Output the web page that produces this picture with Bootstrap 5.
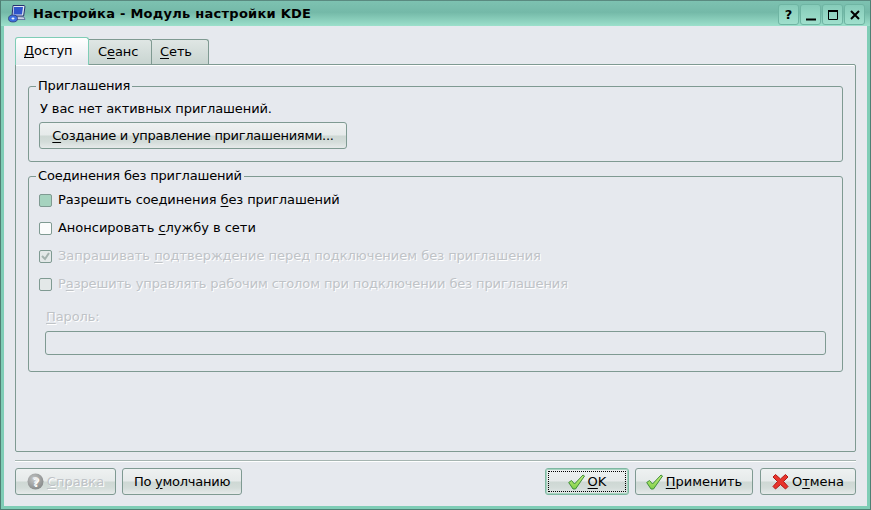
<!DOCTYPE html>
<html lang="ru">
<head>
<meta charset="utf-8">
<title>Настройка - Модуль настройки KDE</title>
<link href="https://cdn.jsdelivr.net/npm/bootstrap@5.3.0/dist/css/bootstrap.min.css" rel="stylesheet">
<style>
html,body{margin:0;height:510px;overflow:hidden}
body{font-family:"DejaVu Sans",sans-serif;font-size:13px;line-height:16px;letter-spacing:-.1px;color:#000;background:#e6e9ee}
.kwin{height:510px;display:flex;flex-direction:column;border:1px solid #4f7f74;border-top-color:#5a8a80;background:#7fcdb6}
.ktitle{height:25px;flex:none;display:flex;align-items:center;background:linear-gradient(#7dc2b1,#74b9a8 45%,#9ce0cb);padding:0 5px 0 6px}
.ktitle-text{font-weight:700;font-size:13px;margin-left:7px;letter-spacing:.26px}
.wbtn{width:21px;height:21px;margin:3px 0 0 1px;align-self:flex-start;border:1px solid #6fb5a3;border-radius:3px;background:linear-gradient(#86cbb9,#a0e0cd);display:flex;align-items:center;justify-content:center;padding:0;font-weight:700;font-size:13px;letter-spacing:0}
.kbody{flex:1;margin:0 3px 3px 3px;background:#e6e9ee;padding:11px 11px 0 11px;display:flex;flex-direction:column;min-height:0}
.ktabs{flex:none;height:27px;align-items:flex-end;border:0;margin:0;position:relative;z-index:1}
.ktab{height:25px;border:1px solid #7f9a92;border-bottom:0;border-left:0;border-radius:0 3px 0 0;background:linear-gradient(#dfe6e4,#c9d5d1);padding:4px 0 0 9px;line-height:16px}
.ktab.on{height:28px;margin-bottom:-1px;border-left:1px solid #7fcdb6;border-right:1px solid #7fcdb6;border-top:1px solid #7fcdb6;border-radius:3px 3px 0 0;background:linear-gradient(#fff,#e6e9ee);padding:5px 0 0 8px}
.ktw1{width:74px}
.ktw2{width:63px}
.ktw3{width:57px;padding-left:8px}
.kpane{height:388px;flex:none;border:1px solid #7f9a92;border-radius:0 2px 2px 2px;padding:13px 12px 0 12px;box-shadow:inset 0 1px 0 #fff}
.kgroup{border:1px solid #7f9a92;border-radius:3px;margin:0 0 6px 0;padding:0 10px;min-width:0}
.kgroup legend{float:none;width:auto;font-size:13px;line-height:16px;margin:0 0 0 -3px;padding:0 2px;letter-spacing:-.18px}
.kg1{height:84px}
.kg2{height:204px}
.ktext{margin-top:7px;height:20px;display:block;padding-left:1px}
.kbtn{height:27px;border:1px solid #7f9a92;border-radius:3px;background:linear-gradient(#eef1f1 0,#e6eaea 48%,#ced8d4 52%,#d3dcd9 75%,#e6eaea 100%);display:inline-flex;align-items:center;justify-content:center;padding:0;font-size:13px;line-height:16px;color:#000;white-space:nowrap}
.kbtn-main{width:308px;margin-top:1px;letter-spacing:-.27px}
.kbtn-def{width:120px;letter-spacing:-.25px}
.kcheck{display:flex;align-items:center;height:28px;gap:6px;margin:0}
.kwide{letter-spacing:-.02px}
.kbox{width:13px;height:13px;flex:none;border:1px solid #7f9a92;border-radius:2px;background:#fbfcfc;display:block}
.kbox.hot{background:#a6d3bf}
.kbox.off{background:#e3e8e8}
.kdis{color:#bfc3c7;text-shadow:1px 1px 0 #fff}
.kchecks{padding-top:2px}
.kpass{margin:11px 0 0 7px}
.kfield{height:24px;width:781px;margin:6px 0 0 6px;border:1px solid #7f9a92;border-radius:3px;background:#e6e9ee}
.ksep{height:2px;flex:none;margin-top:8px;border-top:1px solid #a6b5b1;background:#fff;width:841px}
.kfoot{flex:none;display:flex;margin-top:6px;width:841px;align-items:center}
.kspacer{flex:1}
.kmg6{margin-left:6px}
.kmg7{margin-left:7px}
.kbtn svg{flex:none;margin-right:3px}
.kfocus{border-color:#7fb8a2;box-shadow:inset 0 0 0 1px #a6d3bf;position:relative}
.kdots{position:absolute;inset:2px;border:1px dotted #000}
u{text-underline-offset:2px;text-decoration-thickness:1px}
</style>
</head>
<body>
<div class="kwin">
  <div class="ktitle">
    <svg width="19" height="19" viewBox="0 0 19 19"><path d="M6 1.500h11l1 .8-1.400 9.700H5z" fill="#dfe6f2" stroke="#26306f"/><path d="M7 3h9l-1 7.500H6.500z" fill="#2f54c9"/><path d="M9 12.500l8 .5 1 2.500H9z" fill="#c9d2e4" stroke="#4a5590" stroke-width=".7"/><ellipse cx="6" cy="14.500" rx="4.500" ry="3.500" fill="#3d6fe0" stroke="#26306f" stroke-width=".7"/><ellipse cx="6" cy="14.500" rx="1.500" ry="1" fill="#eef3fb"/></svg>
    <span class="ktitle-text">Настройка - Модуль настройки KDE</span>
    <span class="flex-grow-1"></span>
    <button class="wbtn" type="button">?</button>
    <button class="wbtn" type="button"><svg width="12" height="12" viewBox="0 0 12 12"><path d="M1 10.500h10" stroke="#000" stroke-width="2"/></svg></button>
    <button class="wbtn" type="button"><svg width="12" height="12" viewBox="0 0 12 12"><path d="M1.500 2h9v8.500h-9z" fill="none" stroke="#000"/><path d="M1 2h10" stroke="#000" stroke-width="2"/></svg></button>
    <button class="wbtn" type="button"><svg width="12" height="12" viewBox="0 0 12 12"><path d="M2 2l8 8M10 2l-8 8" stroke="#000" stroke-width="2"/></svg></button>
  </div>
  <div class="kbody">
    <div class="nav ktabs">
      <div class="ktab on ktw1"><u>Д</u>оступ</div>
      <div class="ktab ktw2">С<u>е</u>анс</div>
      <div class="ktab ktw3"><u>С</u>еть</div>
    </div>
    <div class="kpane">
      <fieldset class="kgroup kg1">
        <legend>Приглашения</legend>
        <span class="ktext">У вас нет активных приглашений.</span>
        <button class="kbtn kbtn-main" type="button"><span><u>С</u>оздание и управление приглашениями...</span></button>
      </fieldset>
      <fieldset class="kgroup kg2">
        <legend>Соединения без приглашений</legend>
        <div class="kchecks">
          <label class="kcheck"><span class="kbox hot"></span><span>Разрешить соединения <u>б</u>ез приглашений</span></label>
          <label class="kcheck kwide"><span class="kbox"></span><span>Анонсировать <u>с</u>лужбу в сети</span></label>
          <label class="kcheck kdis kwide"><svg class="kbox off" viewBox="0 0 11 11"><path d="M2 5l3 3 4-6" fill="none" stroke="#a4b2ae" stroke-width="2"/></svg><span>Запрашивать <u>п</u>одтверждение перед подключением без приглашения</span></label>
          <label class="kcheck kdis"><span class="kbox off"></span><span>Р<u>а</u>зрешить управлять рабочим столом при подключении без приглашения</span></label>
        </div>
        <div class="kpass kdis"><u>П</u>ароль:</div>
        <div class="kfield"></div>
      </fieldset>
    </div>
    <div class="ksep"></div>
    <div class="kfoot">
      <button class="kbtn kdis" style="width:101px" type="button"><svg width="17" height="17" viewBox="0 0 17 17"><defs><radialGradient id="hg" cx=".4" cy=".35" r=".7"><stop offset="0" stop-color="#c4c6c6"/><stop offset="1" stop-color="#858888"/></radialGradient></defs><circle cx="8.500" cy="8.500" r="8" fill="url(#hg)"/><text x="8.500" y="13" font-size="12" font-weight="700" fill="#eceded" text-anchor="middle" font-family="DejaVu Sans">?</text></svg><span><u>С</u>правка</span></button>
      <button class="kbtn kbtn-def kmg6" type="button"><span>По <u>у</u>молчанию</span></button>
      <span class="kspacer"></span>
      <button class="kbtn kfocus" style="width:84px" type="button"><span class="kdots"></span><svg width="17" height="16" viewBox="0 0 17 16"><defs><linearGradient id="cg" x1="0" y1="0" x2="0" y2="1"><stop offset="0" stop-color="#c8f07a"/><stop offset="1" stop-color="#7fcf4a"/></linearGradient></defs><path d="M.7 8.500L3.500 6.500 6.500 10 15 1l1.500 1L7.500 15H5z" fill="url(#cg)" stroke="#3f8f3a"/></svg><span><u>O</u>K</span></button>
      <button class="kbtn kmg6" style="width:118px" type="button"><svg width="17" height="16" viewBox="0 0 17 16"><path d="M.7 8.500L3.500 6.500 6.500 10 15 1l1.500 1L7.500 15H5z" fill="url(#cg)" stroke="#3f8f3a"/></svg><span><u>П</u>рименить</span></button>
      <button class="kbtn kmg7" style="width:96px" type="button"><svg width="17" height="17" viewBox="0 0 17 17"><path d="M3.500 1.500L8.500 6l5-4.500 2.500 2.500-4.500 4.500 4.500 5-2.500 2.500-5-4.500-5 4.500L1 13.500l4.500-5L1 4z" fill="#e8342c" stroke="#b01a18"/></svg><span>О<u>т</u>мена</span></button>
    </div>
  </div>
</div>
<script src="https://cdn.jsdelivr.net/npm/bootstrap@5.3.0/dist/js/bootstrap.bundle.min.js"></script>
</body>
</html>
